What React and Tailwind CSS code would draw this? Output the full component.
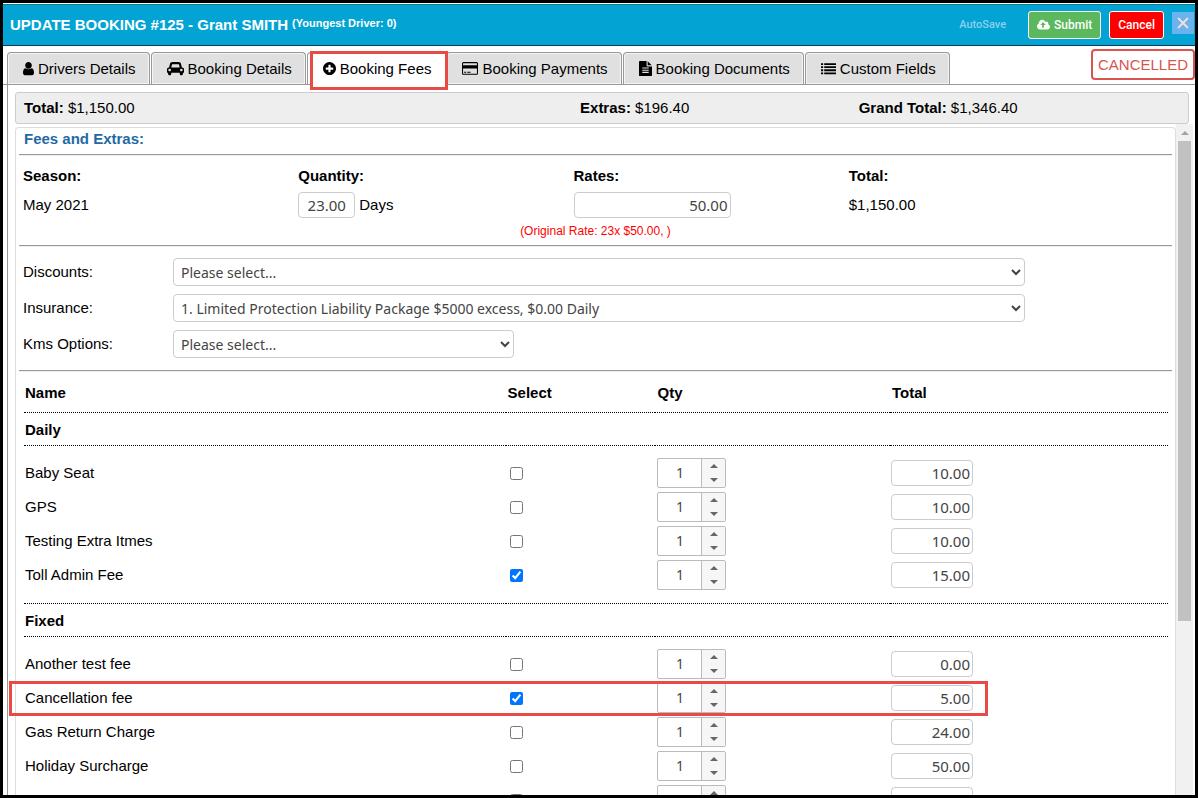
import { Fragment, useState } from "react"

// Icon outlines, each with its own view box
const icons = {
    user: {
        box: "256 0 1280 1792",
        size: "w-[11px]",
        d: "M1536 1399q0 109-62.5 187t-150.5 78h-854q-88 0-150.5-78t-62.5-187q0-85 8.5-160.5t31.5-152 58.5-131 94-89 134.5-34.5q131 128 313 128t313-128q76 0 134.5 34.5t94 89 58.5 131 31.5 152 8.5 160.5zm-256-887q0 159-112.5 271.5t-271.5 112.5-271.5-112.5-112.5-271.5 112.5-271.5 271.5-112.5 271.5 112.5 112.5 271.5z"
    },
    car: {
        box: "0 0 2048 1792",
        size: "w-[17px]",
        d: "M480 1088q0-66-47-113t-113-47-113 47-47 113 47 113 113 47 113-47 47-113zm36-320h1016l-89-357q-2-8-14-17.5t-21-9.5h-768q-9 0-21 9.5t-14 17.5zm1372 320q0-66-47-113t-113-47-113 47-47 113 47 113 113 47 113-47 47-113zm160-96v384q0 14-9 23t-23 9h-96v128q0 80-56 136t-136 56-136-56-56-136v-128h-1024v128q0 80-56 136t-136 56-136-56-56-136v-128h-96q-14 0-23-9t-9-23v-384q0-93 65.5-158.5t158.5-65.5h28l105-419q23-94 104-157.5t179-63.5h768q98 0 179 63.5t104 157.5l105 419h28q93 0 158.5 65.5t65.5 158.5z"
    },
    plus: {
        box: "128 0 1536 1792",
        size: "w-[13px]",
        d: "M1344 960v-128q0-26-19-45t-45-19h-256v-256q0-26-19-45t-45-19h-128q-26 0-45 19t-19 45v256h-256q-26 0-45 19t-19 45v128q0 26 19 45t45 19h256v256q0 26 19 45t45 19h128q26 0 45-19t19-45v-256h256q26 0 45-19t19-45zm320-64q0 209-103 385.5t-279.5 279.5-385.5 103-385.5-103-279.5-279.5-103-385.5 103-385.5 279.5-279.5 385.5-103 385.5 103 279.5 279.5 103 385.5z"
    },
    card: {
        box: "0 0 1920 1792",
        size: "w-4",
        d: "M1760 128q66 0 113 47t47 113v1216q0 66-47 113t-113 47h-1600q-66 0-113-47t-47-113v-1216q0-66 47-113t113-47h1600zm-1600 128q-13 0-22.5 9.5t-9.5 22.5v224h1664v-224q0-13-9.5-22.5t-22.5-9.5h-1600zm1600 1280q13 0 22.5-9.5t9.5-22.5v-608h-1664v608q0 13 9.5 22.5t22.5 9.5h1600zm-1504-128v-128h256v128h-256zm384 0v-128h384v128h-384z"
    },
    file: {
        box: "128 0 1536 1792",
        size: "w-[13px]",
        d: "M1596 476q14 14 28 36h-472v-472q22 14 36 28zm-476 164h544v1056q0 40-28 68t-68 28h-1344q-40 0-68-28t-28-68v-1600q0-40 28-68t68-28h800v544q0 40 28 68t68 28zm160 736v-64q0-14-9-23t-23-9h-704q-14 0-23 9t-9 23v64q0 14 9 23t23 9h704q14 0 23-9t9-23zm0-256v-64q0-14-9-23t-23-9h-704q-14 0-23 9t-9 23v64q0 14 9 23t23 9h704q14 0 23-9t9-23zm0-256v-64q0-14-9-23t-23-9h-704q-14 0-23 9t-9 23v64q0 14 9 23t23 9h704q14 0 23-9t9-23z"
    },
    list: {
        box: "0 0 1792 1792",
        size: "w-[15px]",
        d: "M0 256h256v224h-256zM384 256h1408v224h-1408zM0 624h256v224h-256zM384 624h1408v224h-1408zM0 992h256v224h-256zM384 992h1408v224h-1408zM0 1360h256v224h-256zM384 1360h1408v224h-1408z"
    },
    upload: {
        box: "0 0 1920 1792",
        size: "w-[13px]",
        d: "M1280 864q0-14-9-23l-352-352q-9-9-23-9t-23 9l-351 351q-10 12-10 24 0 14 9 23t23 9h224v352q0 13 9.5 22.5t22.5 9.5h192q13 0 22.5-9.5t9.5-22.5v-352h224q13 0 22.5-9.5t9.5-22.5zm640 288q0 159-112.5 271.5t-271.5 112.5h-1088q-185 0-316.5-131.5t-131.5-316.5q0-130 70-240t188-165q-2-30-2-43 0-212 150-362t362-150q156 0 285.5 87t188.5 231q71-62 166-62 106 0 181 75t75 181q0 76-41 138 130 31 213.5 135.5t83.5 238.5z"
    }
}

const Icon = ({ name }) => (
    <svg viewBox={icons[name].box} className={`${icons[name].size} shrink-0`} fill="currentColor" aria-hidden="true">
        <path d={icons[name].d} />
    </svg>
)

const tabs = [
    { icon: "user", label: "Drivers Details" },
    { icon: "car", label: "Booking Details" },
    { icon: "plus", label: "Booking Fees" },
    { icon: "card", label: "Booking Payments" },
    { icon: "file", label: "Booking Documents" },
    { icon: "list", label: "Custom Fields" }
]

// The last fixed fee is an unnamed one
const groups = [
    {
        title: "Daily",
        fees: [
            { name: "Baby Seat", total: "10.00" },
            { name: "GPS", total: "10.00" },
            { name: "Testing Extra Itmes", total: "10.00" },
            { name: "Toll Admin Fee", total: "15.00", selected: true }
        ]
    },
    {
        title: "Fixed",
        fees: [
            { name: "Another test fee", total: "0.00" },
            { name: "Cancellation fee", total: "5.00", selected: true, marked: true },
            { name: "Gas Return Charge", total: "24.00" },
            { name: "Holiday Surcharge", total: "50.00" },
            { name: "", total: "" }
        ]
    }
]

const field = "h-[26px] rounded border border-[#ccc] bg-white font-['Noto_Sans',sans-serif] text-[15px] text-[#444]"

const Spinner = ({ label }) => {
    const [qty, setQty] = useState(1)

    return (
        <div className="flex h-[30px] w-[69px] overflow-hidden rounded-xs border border-[#bbb]">
            <input
                aria-label={label}
                className="min-w-0 flex-1 text-center font-['Noto_Sans',sans-serif] text-sm text-[#444]"
                value={qty}
                onChange={(e) => setQty(e.target.value)}
            />
            <div className="flex w-6 flex-col border-l border-[#bbb] bg-[#f6f6f6] text-[#666]">
                <button type="button" aria-label="Increase" className="flex flex-1 items-center justify-center" onClick={() => setQty(Number(qty) + 1)}>
                    <svg viewBox="0 0 8 4" className="h-1 w-2" fill="currentColor"><path d="M4 0l4 4H0z" /></svg>
                </button>
                <button type="button" aria-label="Decrease" className="flex flex-1 items-center justify-center" onClick={() => setQty(Number(qty) - 1)}>
                    <svg viewBox="0 0 8 4" className="h-1 w-2" fill="currentColor"><path d="M0 0h8L4 4z" /></svg>
                </button>
            </div>
        </div>
    )
}

const SelectRow = ({ id, label, option, width }) => (
    <div className="grid grid-cols-[150px_1fr] items-center">
        <label htmlFor={id}>{label}</label>
        <select id={id} className={`${width} h-7 rounded border border-[#ccc] bg-white pl-[3px] font-['Noto_Sans',sans-serif] text-sm text-[#444]`}>
            <option>{option}</option>
        </select>
    </div>
)

const Rule = () => <hr className="border-t border-b border-t-[#999] border-b-[#eee]" />

const App = () => {
    return (
        <div className="flex h-screen flex-col overflow-hidden border-3 border-black bg-white font-['Liberation_Sans',Arial,sans-serif] text-[15px] leading-5 text-black">
            {/* Title bar */}
            <header className="mt-px flex h-[42px] shrink-0 items-center border-t border-b border-t-[#0b7d8c] border-b-[#0b3a50] bg-[#03a4d4] pl-[7px] font-bold text-white">
                <h1>UPDATE BOOKING #125 - Grant SMITH</h1>
                <span className="mb-1 ml-1 text-[11px]">(Youngest Driver: 0)</span>
                <span className="ml-auto mr-[22px] font-[Roboto,sans-serif] text-[11px] font-medium text-[#8cd0ee]">AutoSave</span>
                <button type="button" className="mr-2 flex h-7 items-center gap-1 rounded-[3px] border border-white bg-[#5cb85c] px-2 font-[Roboto,sans-serif] text-xs font-medium">
                    <Icon name="upload" />
                    Submit
                </button>
                <button type="button" className="mr-2 h-7 rounded-[3px] border border-white bg-[#f00] px-2 font-[Roboto,sans-serif] text-xs font-medium">Cancel</button>
                <button type="button" aria-label="Close" className="mb-1 mr-px flex size-[22px] items-center justify-center bg-[#69b3ee]">
                    <svg viewBox="0 0 12 12" className="size-3" stroke="#f3dede" strokeWidth="2" fill="none"><path d="M1 1l10 10M11 1L1 11" /></svg>
                </button>
            </header>

            {/* Tabs */}
            <nav className="flex h-[39px] shrink-0 items-end gap-px border-b border-[#999] pl-1">
                {tabs.map((tab) => {
                    const active = tab.label === "Booking Fees"
                    return (
                        <button
                            key={tab.label}
                            type="button"
                            className={`relative flex h-8 items-center gap-1 rounded-t border border-b-0 border-[#999] pl-[15px] pr-[13px] ${active ? "bg-white" : "bg-[#e0e0e0] shadow-[inset_0_0_0_1px_#f4f4f4]"}`}
                        >
                            {/* Marker frame round the open tab */}
                            {active && <span className="absolute -right-1 -top-0.5 -bottom-1.5 left-0.5 z-10 border-3 border-[#e84b45] bg-white" />}
                            <span className="relative z-20 flex items-center gap-1">
                                <Icon name={tab.icon} />
                                {tab.label}
                            </span>
                        </button>
                    )
                })}
                <span className="mb-1 ml-auto flex h-[31px] items-center rounded border-2 border-[#d9534f] px-[5px] text-[#d9534f]">CANCELLED</span>
            </nav>

            <main className="ml-1 flex min-h-0 flex-1 flex-col border-l border-[#999] pl-[7px] pt-[7px]">
                <div className="mr-[6px] grid h-8 shrink-0 grid-cols-[48.1%_24.1%_1fr] items-center rounded-[3px] border border-[#ccc] bg-[#eee] px-2">
                    <span><b>Total:</b> $1,150.00</span>
                    <span><b>Extras:</b> $196.40</span>
                    <span><b>Grand Total:</b> $1,346.40</span>
                </div>

                <div className="flex min-h-0 flex-1">
                    <section className="mt-[3px] flex-1 rounded-t border border-b-0 border-[#ddd] px-[3px]">
                        <h2 className="mb-[5px] pl-[5px] pt-px font-bold text-[#1f6aa5]">Fees and Extras:</h2>
                        <Rule />

                        <div className="grid grid-cols-4 gap-y-1.5 pl-1 pr-12 pt-[10px]">
                            <b>Season:</b>
                            <label htmlFor="quantity" className="font-bold">Quantity:</label>
                            <label htmlFor="rates" className="font-bold">Rates:</label>
                            <b>Total:</b>
                            <div className="flex items-center">May 2021</div>
                            <div className="flex items-center gap-1">
                                <input id="quantity" className={`${field} w-[57px] text-center`} defaultValue="23.00" />
                                Days
                            </div>
                            <input id="rates" className={`${field} w-[157px] px-0.5 text-right`} defaultValue="50.00" />
                            <div className="flex items-center">$1,150.00</div>
                        </div>
                        <p className="mb-1 mt-[3px] text-center text-xs leading-5 text-[#f00]">(Original Rate: 23x $50.00, )</p>
                        <Rule />

                        <div className="flex flex-col gap-2 pb-3 pl-1 pt-[11px]">
                            <SelectRow id="discounts" label="Discounts:" option="Please select..." width="w-[85.3%]" />
                            <SelectRow id="insurance" label="Insurance:" option="1. Limited Protection Liability Package $5000 excess, $0.00 Daily" width="w-[85.3%]" />
                            <SelectRow id="kms" label="Kms Options:" option="Please select..." width="w-[34.1%]" />
                        </div>
                        <Rule />

                        {/* Fee list */}
                        <div className="pl-[5px] pr-1">
                            <table className="w-full table-fixed border-collapse text-left">
                                <thead>
                                    <tr className="h-10 border-b border-dotted border-black">
                                        <th className="w-[42.1%] pl-px pt-0.5">Name</th>
                                        <th className="w-[13.1%] pl-0.5 pt-0.5">Select</th>
                                        <th className="w-[20.5%] pl-0.5 pt-0.5">Qty</th>
                                        <th className="pl-0.5 pt-0.5">Total</th>
                                    </tr>
                                </thead>
                                <tbody>
                                    {groups.map((group, index) => (
                                        <Fragment key={group.title}>
                                            {index > 0 && <tr className="h-[11px] border-b border-dotted border-black"><td colSpan={4} /></tr>}
                                            <tr className="h-[33px] border-b border-dotted border-black">
                                                <th colSpan={4} className="pl-px pt-0.5">{group.title}</th>
                                            </tr>
                                            <tr className="h-[11px]"><td colSpan={4} /></tr>
                                            {group.fees.map((fee) => (
                                                <tr key={fee.name} className="relative h-[34px]">
                                                    <td className="pl-px">
                                                        {fee.name}
                                                        {fee.marked && <span className="pointer-events-none absolute -bottom-px -left-[15px] top-0 w-[979px] border-3 border-[#e84b45]" />}
                                                    </td>
                                                    <td className="pl-1">
                                                        <input type="checkbox" aria-label={`Select ${fee.name}`} className="block size-[13px]" defaultChecked={fee.selected} />
                                                    </td>
                                                    <td className="pl-0.5"><Spinner label={`${fee.name} quantity`} /></td>
                                                    <td className="pl-px">
                                                        <input aria-label={`${fee.name} total`} className={`${field} block w-[82px] px-0.5 text-right`} defaultValue={fee.total} />
                                                    </td>
                                                </tr>
                                            ))}
                                        </Fragment>
                                    ))}
                                </tbody>
                            </table>
                        </div>
                    </section>

                    {/* Scroll bar */}
                    <div className="mr-0.5 flex w-[17px] flex-col items-center bg-[#f1f1f1]">
                        <div className="flex h-[17px] items-center">
                            <svg viewBox="0 0 8 4" className="h-1 w-2" fill="#a3a3a3"><path d="M4 0l4 4H0z" /></svg>
                        </div>
                        <div className="h-[71.5%] w-[13px] bg-[#c1c1c1]" />
                    </div>
                </div>
            </main>
        </div>
    )
}

export default App
